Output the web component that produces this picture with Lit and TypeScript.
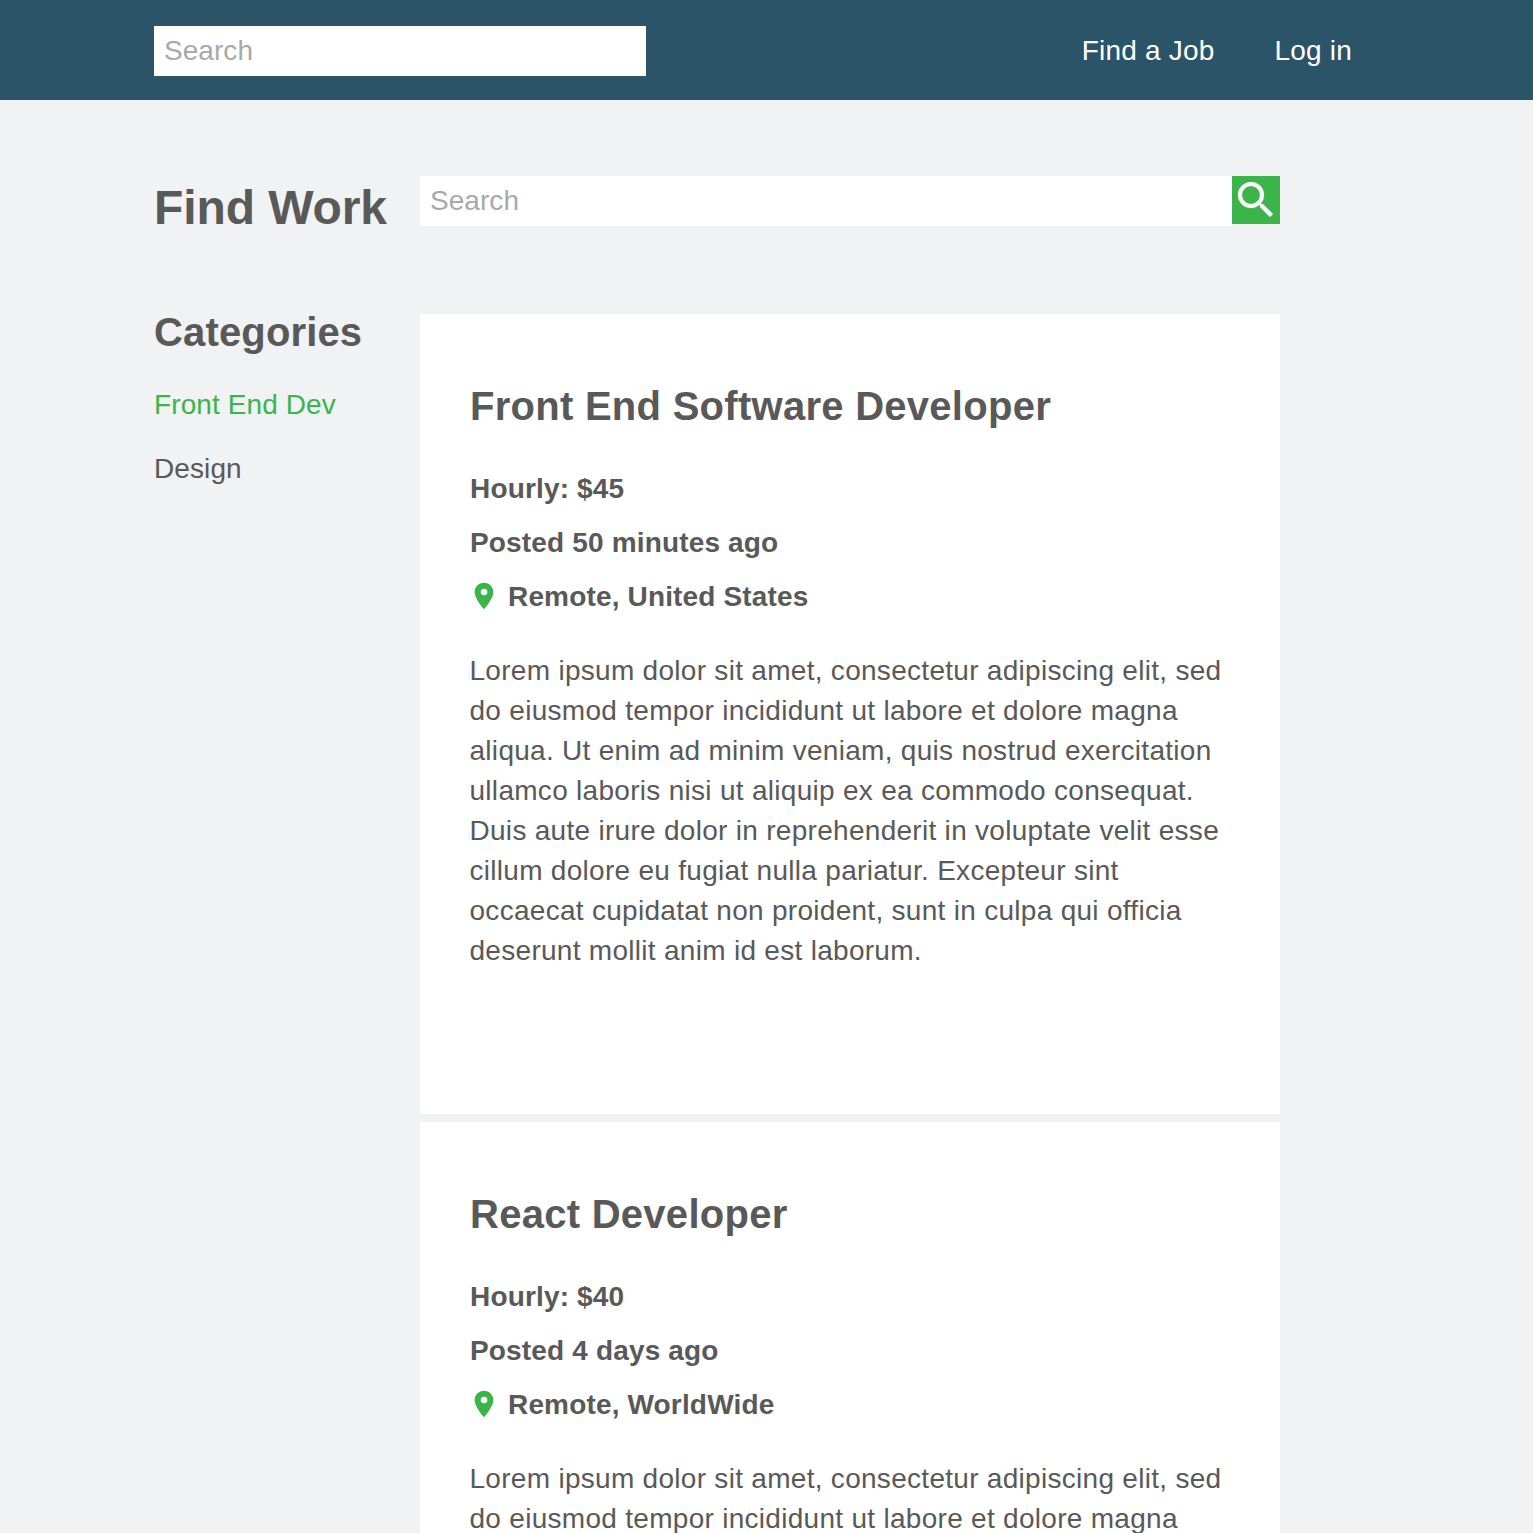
import { LitElement, html, css } from "lit";
import { customElement } from "lit/decorators.js";

interface Job { title: string; rate: string; posted: string; place: string; }

const LOREM =
  "Lorem ipsum dolor sit amet, consectetur adipiscing elit, sed do eiusmod tempor incididunt ut labore et dolore magna aliqua. Ut enim ad minim veniam, quis nostrud exercitation ullamco laboris nisi ut aliquip ex ea commodo consequat. Duis aute irure dolor in reprehenderit in voluptate velit esse cillum dolore eu fugiat nulla pariatur. Excepteur sint occaecat cupidatat non proident, sunt in culpa qui officia deserunt mollit anim id est laborum.";

const JOBS: Job[] = [
  { title: "Front End Software Developer", rate: "$45", posted: "50 minutes ago", place: "Remote, United States" },
  { title: "React Developer", rate: "$40", posted: "4 days ago", place: "Remote, WorldWide" },
];

@customElement("app-root")
export class AppRoot extends LitElement {
  static styles = css`
    :host {
      display: block;
      height: 100vh;
      overflow: hidden;
      background: #f0f2f4;
      color: #595959;
      font: 28px/40px "Liberation Sans", Arial, sans-serif;
      letter-spacing: 0.2px;
    }
    * { box-sizing: border-box; }
    h1, h2, p { margin: 0; }
    .bar {
      display: flex;
      align-items: flex-start;
      height: 100px;
      padding: 26px 181px 0 154px;
      background: #2c5468;
    }
    .field {
      display: block;
      height: 50px;
      padding: 0 10px;
      border: 0;
      border-radius: 0;
      outline: 0;
      background: #fff;
      color: #595959;
      font: inherit;
      letter-spacing: 0.05px;
    }
    .field::placeholder { color: #a9a9a9; opacity: 1; }
    .bar .field { width: 492px; }
    .nav {
      display: flex;
      gap: 60px;
      margin-left: auto;
      padding-top: 5px;
    }
    .nav a { color: #fff; text-decoration: none; }
    .page {
      display: grid;
      grid-template-columns: 266px 860px;
      padding: 76px 0 0 154px;
    }
    h1 { font-size: 48px; line-height: 64px; height: 138px; letter-spacing: -0.1px; white-space: nowrap; }
    .search { display: flex; align-items: flex-start; }
    .search .field { flex: 1; min-width: 0; }
    .go {
      width: 48px;
      height: 48px;
      padding: 0;
      border: 0;
      background: #3bb54a;
    }
    .go svg { display: block; width: 48px; height: 48px; }
    h2 { font-size: 40px; line-height: 46px; letter-spacing: 0.27px; }
    .side h2 { height: 46px; margin-bottom: 25px; line-height: 37px; letter-spacing: 0.15px; }
    .cat { display: block; margin-bottom: 24px; color: #595959; letter-spacing: 0.1px; text-decoration: none; }
    .cat.on { color: #3bb54a; }
    .job {
      height: 800px;
      margin-bottom: 8px;
      padding: 69px 50px 0;
      background: #fff;
    }
    .job h2 { margin-bottom: 40px; }
    .meta { display: flex; align-items: center; height: 40px; margin-bottom: 14px; font-weight: 700; letter-spacing: 0.16px; }
    .meta svg { width: 32px; height: 32px; margin: 0 8px 2px -2px; }
    .job p { padding-top: 20px; margin-left: -0.5px; letter-spacing: 0.29px; }
  `;

  private job(j: Job) {
    return html`<article class="job">
      <h2>${j.title}</h2>
      <div class="meta">Hourly: ${j.rate}</div>
      <div class="meta">Posted ${j.posted}</div>
      <div class="meta">
        <svg viewBox="0 0 24 24" fill="#3bb54a" aria-hidden="true"><path d="M12 2C8.13 2 5 5.13 5 9c0 5.25 7 13 7 13s7-7.75 7-13c0-3.87-3.13-7-7-7zm0 9.500a2.500 2.500 0 1 1 0-5 2.500 2.500 0 0 1 0 5z" /></svg>
        ${j.place}
      </div>
      <p>${LOREM}</p>
    </article>`;
  }

  render() {
    return html`
      <header class="bar">
        <input class="field" type="text" placeholder="Search" />
        <nav class="nav"><a href="#">Find a Job</a><a href="#">Log in</a></nav>
      </header>
      <main class="page">
        <h1>Find Work</h1>
        <div class="search">
          <input class="field" type="text" placeholder="Search" />
          <button class="go" aria-label="Search">
            <svg viewBox="0 0 24 24" fill="#fff" stroke="#fff" stroke-width="0.12" aria-hidden="true"><path d="M15.5 14h-.79l-.28-.27A6.471 6.471 0 0 0 16 9.5 6.5 6.5 0 1 0 9.5 16c1.610 0 3.090-.59 4.230-1.570l.27.28v.79l5 4.990L20.490 19l-4.990-5zm-6 0C7.010 14 5 11.990 5 9.500S7.010 5 9.500 5 14 7.010 14 9.500 11.990 14 9.500 14z" /></svg>
          </button>
        </div>
        <aside class="side">
          <h2>Categories</h2>
          <a class="cat on" href="#">Front End Dev</a>
          <a class="cat" href="#">Design</a>
        </aside>
        <section>${JOBS.map((j) => this.job(j))}</section>
      </main>
    `;
  }
}
